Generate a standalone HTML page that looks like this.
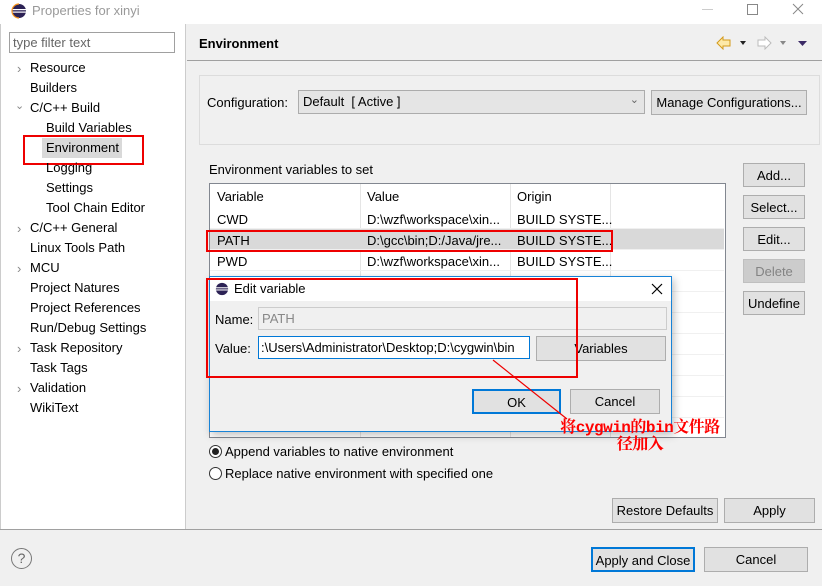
<!DOCTYPE html>
<html><head><meta charset="utf-8"><style>
*{box-sizing:border-box;margin:0;padding:0}
body{width:822px;height:586px;position:relative;overflow:hidden;background:#f0f0f0;font-family:"Liberation Sans","Noto Sans CJK SC",sans-serif;font-size:13px;color:#000}
.a{position:absolute;white-space:nowrap}
.btn{position:absolute;background:#e1e1e1;border:1px solid #adadad;text-align:center;font-size:13px}
.row{position:absolute;left:210px;width:514px;height:21px;border-bottom:1px solid #f0f0f0}
</style></head><body>
<div class="a" style="left:0;top:0;width:822px;height:24px;background:#fff"></div>
<svg class="a" style="left:11px;top:3px" width="16" height="16" viewBox="0 0 16 16"><circle cx="8" cy="8" r="7" fill="#2c2255"/><rect x="1" y="6" width="14" height="1.2" fill="#fff"/><rect x="1" y="8.5" width="14" height="1.2" fill="#fff"/><path d="M8 1a7 7 0 0 0 0 14" fill="none" stroke="#f7941e" stroke-width="1.2"/></svg>
<div class="a" style="left:32px;top:3px;color:#999;font-size:13px">Properties for xinyi</div>
<div class="a" style="left:702px;top:9px;width:11px;height:1px;background:#ccc"></div>
<div class="a" style="left:747px;top:4px;width:11px;height:11px;border:1px solid #888"></div>
<svg class="a" style="left:792px;top:3px" width="12" height="12"><path d="M1 1L11 11M11 1L1 11" stroke="#888" stroke-width="1"/></svg>
<div class="a" style="left:0;top:24px;width:186px;height:505px;background:#fff;border-right:1px solid #ccc;border-left:1px solid #ccc"></div>
<div class="a" style="left:9px;top:32px;width:166px;height:21px;border:1px solid #a0a0a0;background:#fff;color:#666;padding:2px 3px">type filter text</div>
<div class="a" style="left:17px;top:61px;color:#888">›</div>
<div class="a" style="left:30px;top:60px">Resource</div>
<div class="a" style="left:30px;top:80px">Builders</div>
<div class="a" style="left:15px;top:99px;color:#888;font-size:11px">⌄</div>
<div class="a" style="left:30px;top:100px">C/C++ Build</div>
<div class="a" style="left:46px;top:120px">Build Variables</div>
<div class="a" style="left:42px;top:138px;width:80px;height:20px;background:#d9d9d9"></div>
<div class="a" style="left:46px;top:140px">Environment</div>
<div class="a" style="left:23px;top:135px;width:121px;height:30px;border:2px solid #e00"></div>
<div class="a" style="left:46px;top:160px">Logging</div>
<div class="a" style="left:46px;top:180px">Settings</div>
<div class="a" style="left:46px;top:200px">Tool Chain Editor</div>
<div class="a" style="left:17px;top:221px;color:#888">›</div>
<div class="a" style="left:30px;top:220px">C/C++ General</div>
<div class="a" style="left:30px;top:240px">Linux Tools Path</div>
<div class="a" style="left:17px;top:261px;color:#888">›</div>
<div class="a" style="left:30px;top:260px">MCU</div>
<div class="a" style="left:30px;top:280px">Project Natures</div>
<div class="a" style="left:30px;top:300px">Project References</div>
<div class="a" style="left:30px;top:320px">Run/Debug Settings</div>
<div class="a" style="left:17px;top:341px;color:#888">›</div>
<div class="a" style="left:30px;top:340px">Task Repository</div>
<div class="a" style="left:30px;top:360px">Task Tags</div>
<div class="a" style="left:17px;top:381px;color:#888">›</div>
<div class="a" style="left:30px;top:380px">Validation</div>
<div class="a" style="left:30px;top:400px">WikiText</div>
<div class="a" style="left:187px;top:60px;width:635px;height:1px;background:#a0a0a0"></div>
<div class="a" style="left:199px;top:36px;font-weight:bold">Environment</div>
<svg class="a" style="left:716px;top:36px" width="100" height="14" viewBox="0 0 100 14"><path d="M1 7l6-6v3h7v6H7v3z" fill="#fde9a8" stroke="#d49a1a"/><path d="M24 5h6l-3 4z" fill="#222"/><path d="M55 7l-6-6v3h-7v6h7v3z" fill="#fff" stroke="#bbb"/><path d="M64 5h6l-3 4z" fill="#888"/><path d="M82 5h9l-4.5 5z" fill="#3b2a66"/></svg>
<div class="a" style="left:199px;top:75px;width:621px;height:70px;border:1px solid #dcdcdc"></div>
<div class="a" style="left:207px;top:95px">Configuration:</div>
<div class="a" style="left:298px;top:90px;width:347px;height:24px;background:#e5e5e5;border:1px solid #acacac;padding:3px 4px">Default &nbsp;[ Active ]<span style="position:absolute;right:5px;top:2px;color:#666;font-size:11px">⌄</span></div>
<div class="btn" style="left:651px;top:90px;width:156px;height:25px;padding-top:4px">Manage Configurations...</div>
<div class="a" style="left:209px;top:162px">Environment variables to set</div>
<div class="a" style="left:209px;top:183px;width:517px;height:255px;background:#fff;border:1px solid #828790"></div>
<div class="a" style="left:360px;top:184px;width:1px;height:253px;background:#e5e5e5"></div>
<div class="a" style="left:510px;top:184px;width:1px;height:253px;background:#e5e5e5"></div>
<div class="a" style="left:610px;top:184px;width:1px;height:253px;background:#e5e5e5"></div>
<div class="row" style="top:208px"></div><div class="row" style="top:229px;background:#d9d9d9"></div><div class="row" style="top:250px"></div><div class="row" style="top:271px"></div><div class="row" style="top:292px"></div><div class="row" style="top:313px"></div><div class="row" style="top:334px"></div><div class="row" style="top:355px"></div><div class="row" style="top:376px"></div><div class="row" style="top:397px"></div>
<div class="a" style="left:217px;top:189px">Variable</div><div class="a" style="left:367px;top:189px">Value</div><div class="a" style="left:517px;top:189px">Origin</div>
<div class="a" style="left:217px;top:212px">CWD</div><div class="a" style="left:367px;top:212px">D:\wzf\workspace\xin...</div><div class="a" style="left:517px;top:212px">BUILD SYSTE...</div>
<div class="a" style="left:217px;top:233px">PATH</div><div class="a" style="left:367px;top:233px">D:\gcc\bin;D:/Java/jre...</div><div class="a" style="left:517px;top:233px">BUILD SYSTE...</div>
<div class="a" style="left:217px;top:254px">PWD</div><div class="a" style="left:367px;top:254px">D:\wzf\workspace\xin...</div><div class="a" style="left:517px;top:254px">BUILD SYSTE...</div>
<div class="a" style="left:206px;top:230px;width:407px;height:22px;border:2px solid #e00"></div>
<div class="btn" style="left:743px;top:163px;width:62px;height:24px;padding-top:4px">Add...</div>
<div class="btn" style="left:743px;top:195px;width:62px;height:24px;padding-top:4px">Select...</div>
<div class="btn" style="left:743px;top:227px;width:62px;height:24px;padding-top:4px">Edit...</div>
<div class="btn" style="left:743px;top:259px;width:62px;height:24px;padding-top:4px;background:#ccc;border-color:#bfbfbf;color:#838383">Delete</div>
<div class="btn" style="left:743px;top:291px;width:62px;height:24px;padding-top:4px">Undefine</div>
<div class="a" style="left:209px;top:445px;width:13px;height:13px;border:1px solid #333;border-radius:50%;background:#fff"><div style="margin:2px;width:7px;height:7px;border-radius:50%;background:#222"></div></div>
<div class="a" style="left:225px;top:444px">Append variables to native environment</div>
<div class="a" style="left:209px;top:467px;width:13px;height:13px;border:1px solid #333;border-radius:50%;background:#fff"></div>
<div class="a" style="left:225px;top:466px">Replace native environment with specified one</div>
<div class="btn" style="left:612px;top:498px;width:106px;height:25px;padding-top:4px">Restore Defaults</div>
<div class="btn" style="left:724px;top:498px;width:91px;height:25px;padding-top:4px">Apply</div>
<div class="a" style="left:0;top:529px;width:822px;height:1px;background:#a0a0a0"></div>
<div class="a" style="left:11px;top:548px;width:21px;height:21px;border:1.5px solid #777;border-radius:50%;text-align:center;color:#666;font-size:14px;line-height:18px">?</div>
<div class="btn" style="left:591px;top:547px;width:104px;height:25px;padding-top:4px;border:2px solid #0078d7">Apply and Close</div>
<div class="btn" style="left:704px;top:547px;width:104px;height:25px;padding-top:4px">Cancel</div>
<div class="a" style="left:209px;top:276px;width:463px;height:156px;background:#f0f0f0;border:1px solid #1883d7;box-shadow:2px 3px 8px rgba(0,0,0,.25)"></div>
<div class="a" style="left:210px;top:277px;width:461px;height:24px;background:#fff"></div>
<svg class="a" style="left:215px;top:282px" width="14" height="14" viewBox="0 0 16 16"><circle cx="8" cy="8" r="7" fill="#2c2255"/><rect x="1" y="6" width="14" height="1.2" fill="#fff"/><rect x="1" y="8.5" width="14" height="1.2" fill="#fff"/></svg>
<div class="a" style="left:234px;top:281px">Edit variable</div>
<svg class="a" style="left:651px;top:283px" width="12" height="12"><path d="M1 1L11 11M11 1L1 11" stroke="#000" stroke-width="1.2"/></svg>
<div class="a" style="left:215px;top:312px">Name:</div>
<div class="a" style="left:258px;top:307px;width:409px;height:23px;border:1px solid #ccc;background:#f0f0f0;color:#888;padding:3px 3px">PATH</div>
<div class="a" style="left:215px;top:341px">Value:</div>
<div class="a" style="left:258px;top:336px;width:272px;height:23px;border:1px solid #0078d7;background:#fff;padding:3px 2px;overflow:hidden">:\Users\Administrator\Desktop;D:\cygwin\bin</div>
<div class="btn" style="left:536px;top:336px;width:130px;height:25px;padding-top:4px">Variables</div>
<div class="btn" style="left:472px;top:389px;width:89px;height:25px;padding-top:4px;border:2px solid #0078d7">OK</div>
<div class="btn" style="left:570px;top:389px;width:90px;height:25px;padding-top:4px">Cancel</div>
<div class="a" style="left:206px;top:278px;width:372px;height:100px;border:2px solid #e00"></div>
<svg class="a" style="left:0;top:0" width="822" height="586"><line x1="493" y1="360" x2="567" y2="419" stroke="#e00" stroke-width="1.2"/></svg>
<div class="a" style="left:557px;top:420px;width:166px;color:#f00;font-weight:bold;font-size:16px;font-family:'Liberation Mono','Noto Serif CJK SC',serif;line-height:17px;text-align:center;letter-spacing:-0.5px">将cygwin的bin文件路<br>径加入</div>
</body></html>
